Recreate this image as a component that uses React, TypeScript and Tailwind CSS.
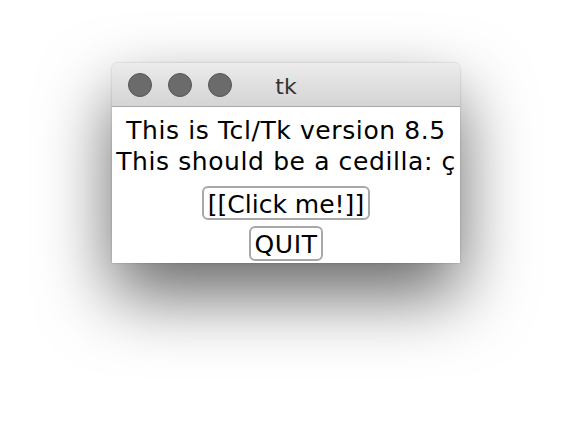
export default function App() {
  return (
    <div className="flex h-[424px] w-[572px] items-start justify-center bg-white pt-[63px]" style={{ fontFamily: '"DejaVu Sans", "Liberation Sans", sans-serif' }}>
      <div className="flex w-[348px] flex-col overflow-hidden rounded-t-[6px] shadow-[0_32px_70px_rgba(0,0,0,0.6),0_0_2px_rgba(0,0,0,0.25)]">
        {/* title bar */}
        <div className="relative flex h-[44px] items-center border-b border-[#a9a9a9] bg-gradient-to-b from-[#ececec] to-[#d4d4d4] px-[16px]">
          <div className="flex gap-[16px]">
            <span className="h-[24px] w-[24px] rounded-full border border-[#575757] bg-[#6b6b6b]" />
            <span className="h-[24px] w-[24px] rounded-full border border-[#575757] bg-[#6b6b6b]" />
            <span className="h-[24px] w-[24px] rounded-full border border-[#575757] bg-[#6b6b6b]" />
          </div>
          <span className="absolute inset-x-0 top-[11px] text-center text-[22px] leading-[26px] text-[#333]">tk</span>
        </div>
        {/* content */}
        <div className="flex flex-col items-center bg-white pt-[8px] pb-[2px] text-[25px] tracking-[0.6px] text-black">
          <div className="whitespace-nowrap leading-[31px]">This is Tcl/Tk version 8.5</div>
          <div className="whitespace-nowrap leading-[31px]">This should be a cedilla: ç</div>
          <button className="mt-[9px] h-[34px] w-[168px] whitespace-nowrap rounded-[6px] border-2 border-[#a8a8a8] bg-white px-0 pt-[3px] text-[25px] leading-[28px] tracking-[0px]">
            [[Click me!]]
          </button>
          <button className="mt-[6px] h-[35px] w-[74px] whitespace-nowrap rounded-[6px] border-2 border-[#a8a8a8] bg-white px-0 pt-[3px] text-[25px] leading-[28px] tracking-[0.6px]">
            QUIT
          </button>
        </div>
      </div>
    </div>
  );
}
